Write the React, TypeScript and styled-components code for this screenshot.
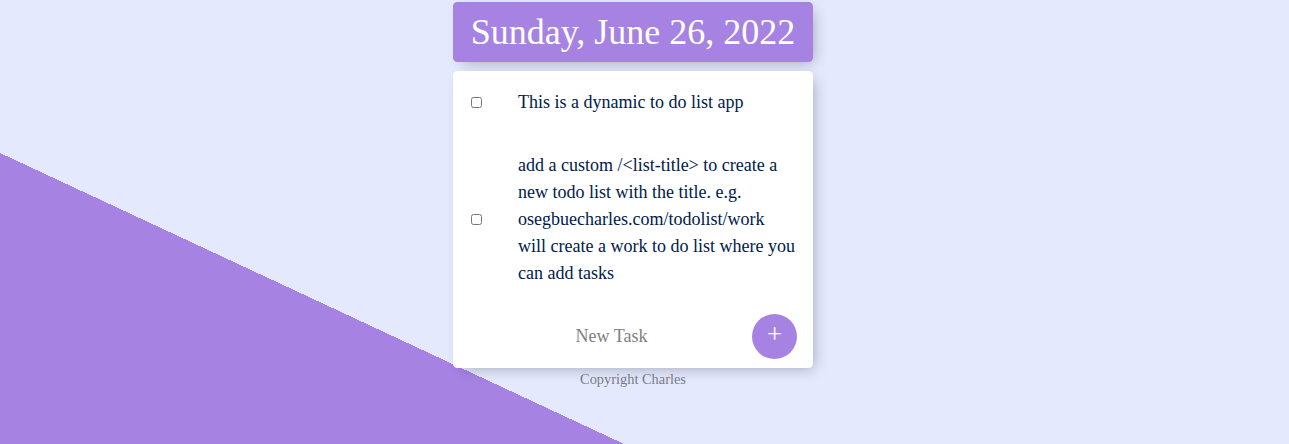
import React from "react";
import styled, { createGlobalStyle } from "styled-components";

const GlobalStyle = createGlobalStyle`
  html {
    background-color: #E4E9FD;
    background-image: linear-gradient(25deg, #A683E3 50%, #E4E9FD 50%);
    background-size: 100% 907px;
    background-repeat: no-repeat;
    min-height: 100%;
  }
  body {
    margin: 0;
    font-family: "Liberation Serif", "Times New Roman", serif;
  }
  * { box-sizing: border-box; }
`;

const Page = styled.div`
  display: flex;
  flex-direction: column;
  align-items: center;
  padding: 2px 23px 0 0;
`;

const Column = styled.main`
  width: 360px;
  display: flex;
  flex-direction: column;
`;

const Heading = styled.header`
  background-color: #A683E3;
  border-radius: 4.5px;
  box-shadow: 4.5px 4.5px 13.5px -4.5px rgba(0, 0, 0, 0.3);
  text-align: center;
`;

const Title = styled.h1`
  margin: 0;
  padding: 10px;
  color: #fff;
  font-size: 36px;
  font-weight: 400;
  line-height: 40px;
`;

const Card = styled.section`
  margin-top: 9px;
  background: #fff;
  border-radius: 4.5px;
  box-shadow: 4.5px 4.5px 13.5px -4.5px rgba(0, 0, 0, 0.3);
`;

const Item = styled.div`
  display: flex;
  align-items: center;
  min-height: 63px;
`;

const Check = styled.input`
  width: 11px;
  height: 11px;
  margin: 0 18px;
  flex: none;
`;

const Text = styled.p`
  margin: 0;
  padding: 18px 17px 18px 18px;
  font-size: 18px;
  line-height: 27px;
  color: #00204a;
`;

const Form = styled.form`
  display: flex;
  align-items: center;
  margin-left: 18px;
`;

const TaskInput = styled.input`
  width: 281px;
  height: 54px;
  border: none;
  background: transparent;
  text-align: center;
  font-family: "Liberation Serif", "Times New Roman", serif;
  font-size: 18px;
  color: #00204a;
  &::placeholder {
    color: grey;
    opacity: 1;
  }
  &:focus {
    outline: none;
  }
`;

const AddButton = styled.button`
  width: 45px;
  height: 45px;
  border-radius: 50%;
  border: 0;
  background-color: #A683E3;
  color: #fff;
  font-family: "Liberation Serif", "Times New Roman", serif;
  font-size: 27px;
  line-height: 1;
  padding: 0 0 5px;
  display: flex;
  align-items: center;
  justify-content: center;
  flex: none;
`;

const Footer = styled.footer`
  margin-top: 3px;
  text-align: center;
  color: rgba(0, 0, 0, 0.5);
  font-size: 14.4px;
`;

const items = [
  "This is a dynamic to do list app",
  "add a custom /<list-title> to create a new todo list with the title. e.g. osegbuecharles.com/todolist/work will create a work to do list where you can add tasks",
];

export default function App() {
  return (
    <>
      <GlobalStyle />
      <Page>
        <Column>
          <Heading>
            <Title>Sunday, June 26, 2022</Title>
          </Heading>
          <Card>
            {items.map((t) => (
              <Item key={t}>
                <Check type="checkbox" />
                <Text>{t}</Text>
              </Item>
            ))}
            <Item>
              <Form onSubmit={(e) => e.preventDefault()}>
                <TaskInput type="text" placeholder="New Task" />
                <AddButton type="submit">+</AddButton>
              </Form>
            </Item>
          </Card>
          <Footer>Copyright Charles</Footer>
        </Column>
      </Page>
    </>
  );
}
